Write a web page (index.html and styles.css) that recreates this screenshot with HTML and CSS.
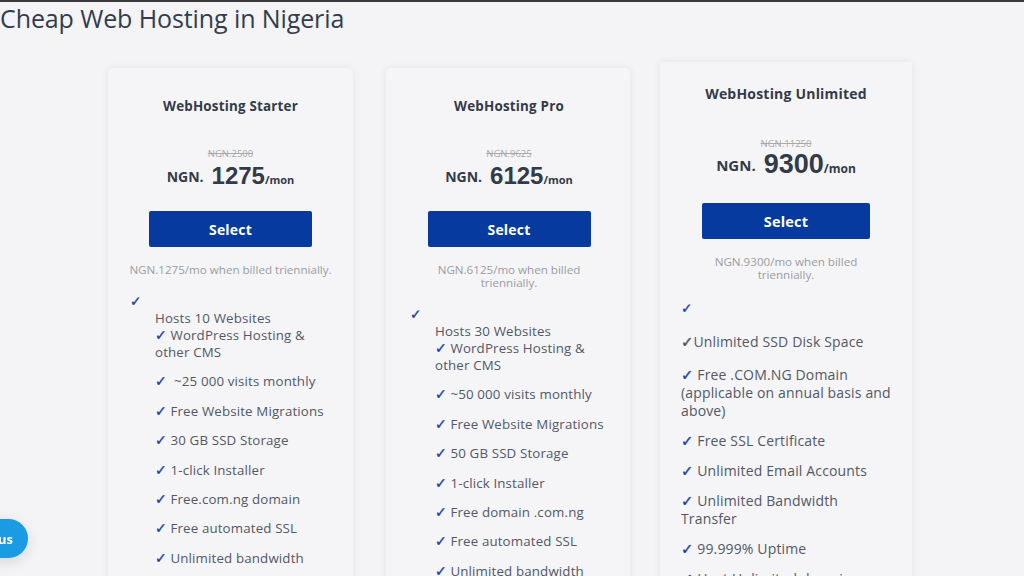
FILE: index.html
```html
<!DOCTYPE html>
<html lang="en">
<head>
<meta charset="utf-8">
<title>Cheap Web Hosting in Nigeria</title>
<link rel="stylesheet" href="styles.css">
</head>
<body>
<h1 class="page-title">Cheap Web Hosting in Nigeria</h1>
<section class="plans">
  <article class="plan plan-starter">
    <h2 class="plan-name">WebHosting Starter</h2>
    <div class="old-price">NGN.2500</div>
    <div class="price"><span class="cur">NGN.</span><span class="amount">1275</span><span class="per">/mon</span></div>
    <a class="select-btn" href="#">Select</a>
    <p class="billing one-line">NGN.1275/mo when billed triennially.</p>
    <p class="lead-check"><span class="ck">✓</span></p>
    <ul class="features indented">
      <li>Hosts 10 Websites<br><span class="ck">✓</span> WordPress Hosting &amp; other CMS</li>
      <li><span class="ck">✓</span>&nbsp; ~25 000 visits monthly</li>
      <li><span class="ck">✓</span> Free Website Migrations</li>
      <li><span class="ck">✓</span> 30 GB SSD Storage</li>
      <li><span class="ck">✓</span> 1-click Installer</li>
      <li><span class="ck">✓</span> Free.com.ng domain</li>
      <li><span class="ck">✓</span> Free automated SSL</li>
      <li><span class="ck">✓</span> Unlimited bandwidth</li>
      <li><span class="ck">✓</span> Free email accounts</li>
    </ul>
  </article>
  <article class="plan plan-pro">
    <h2 class="plan-name">WebHosting Pro</h2>
    <div class="old-price">NGN.9625</div>
    <div class="price"><span class="cur">NGN.</span><span class="amount">6125</span><span class="per">/mon</span></div>
    <a class="select-btn" href="#">Select</a>
    <p class="billing">NGN.6125/mo when billed<br>triennially.</p>
    <p class="lead-check"><span class="ck">✓</span></p>
    <ul class="features indented">
      <li>Hosts 30 Websites<br><span class="ck">✓</span> WordPress Hosting &amp; other CMS</li>
      <li><span class="ck">✓</span> ~50 000 visits monthly</li>
      <li><span class="ck">✓</span> Free Website Migrations</li>
      <li><span class="ck">✓</span> 50 GB SSD Storage</li>
      <li><span class="ck">✓</span> 1-click Installer</li>
      <li><span class="ck">✓</span> Free domain .com.ng</li>
      <li><span class="ck">✓</span> Free automated SSL</li>
      <li><span class="ck">✓</span> Unlimited bandwidth</li>
    </ul>
  </article>
  <article class="plan plan-unlimited">
    <h2 class="plan-name">WebHosting Unlimited</h2>
    <div class="old-price">NGN.11250</div>
    <div class="price"><span class="cur">NGN.</span><span class="amount">9300</span><span class="per">/mon</span></div>
    <a class="select-btn" href="#">Select</a>
    <p class="billing">NGN.9300/mo when billed<br>triennially.</p>
    <p class="lead-check"><span class="ck">✓</span></p>
    <ul class="features flat">
      <li><span class="ck dark">✓</span>Unlimited SSD Disk Space</li>
      <li><span class="ck">✓</span> Free .COM.NG Domain (applicable on annual basis and above)</li>
      <li><span class="ck">✓</span> Free SSL Certificate</li>
      <li><span class="ck">✓</span> Unlimited Email Accounts</li>
      <li><span class="ck">✓</span> Unlimited Bandwidth Transfer</li>
      <li><span class="ck">✓</span> 99.999% Uptime</li>
      <li><span class="ck">✓</span> Host Unlimited domains</li>
    </ul>
  </article>
</section>
<a class="contact-btn" href="#">Contact us</a>
</body>
</html>
```
FILE: styles.css
```css
html, body {
  margin: 0;
  padding: 0;
}
body {
  background: #f4f4f6;
  border-top: 2px solid #3b3b3d;
  font-family: "Open Sans", "Noto Sans", sans-serif;
  color: #333b4c;
  overflow: hidden;
  height: 574px;
}
.page-title {
  margin: 0;
  padding-left: 0;
  font-size: 25px;
  line-height: 32px;
  font-weight: 400;
  color: #333c4e;
  letter-spacing: -0.1px;
}
.plans {
  display: flex;
  align-items: flex-start;
  padding-left: 108px;
  padding-top: 28px;
}
.plan {
  background: #f5f5f7;
  border-radius: 5px;
  box-shadow: 0 0 9px rgba(0, 0, 0, 0.07);
  text-align: center;
  box-sizing: border-box;
}
.plan-starter {
  width: 245px;
  margin-top: 6px;
  padding: 29px 22px 20px 22px;
}
.plan-pro {
  width: 244px;
  margin-top: 6px;
  margin-left: 33px;
  padding: 29px 22px 20px 24px;
}
.plan-unlimited {
  width: 252px;
  margin-left: 30px;
  padding: 23px 21px 20px 21px;
  border-top-left-radius: 0;
  border-top-right-radius: 0;
}
.plan-name {
  margin: 0;
  font-size: 13.4px;
  line-height: 18px;
  font-weight: 700;
  color: #333a4a;
  letter-spacing: 0.2px;
}
.plan-unlimited .plan-name {
  font-size: 14px;
}
.old-price {
  margin-top: 32px;
  font-size: 9.5px;
  line-height: 14px;
  color: #a9a9ad;
  text-decoration: line-through;
}
.plan-unlimited .old-price {
  margin-top: 34px;
}
.price {
  display: flex;
  justify-content: center;
  align-items: baseline;
  height: 30px;
  line-height: 30px;
  color: #333a48;
  font-weight: 700;
}
.price .cur {
  font-size: 14px;
  margin-right: 8px;
  position: relative;
  top: -2px;
}
.price .amount {
  font-family: "Liberation Sans", Arial, sans-serif;
  font-size: 24px;
}
.price .per {
  font-size: 11px;
}
.plan-unlimited .price {
  margin-top: -2px;
}
.plan-unlimited .price .cur {
  font-size: 15px;
}
.plan-unlimited .price .amount {
  font-size: 27px;
}
.plan-unlimited .price .per {
  font-size: 12px;
}
.select-btn {
  display: flex;
  align-items: center;
  justify-content: center;
  margin: 20px auto 0 auto;
  width: 163px;
  height: 36px;
  background: #063a9e;
  border-radius: 2px;
  color: #ffffff;
  text-decoration: none;
  font-weight: 700;
  font-size: 14px;
  letter-spacing: 0.2px;
}
.plan-unlimited .select-btn {
  width: 168px;
  margin-top: 24px;
  font-size: 14.5px;
}
.billing {
  margin: 16px 0 0 0;
  font-size: 11.6px;
  line-height: 13px;
  color: #9a9ca2;
}
.billing.one-line {
  white-space: nowrap;
  margin-left: -4px;
  margin-right: -4px;
}
.lead-check {
  margin: 16px 0 0 0;
  text-align: left;
  font-size: 13px;
  line-height: 18px;
}
.plan-unlimited .lead-check {
  margin-top: 18px;
  line-height: 18px;
}
.ck {
  color: #1d3f9c;
  font-family: "DejaVu Sans", sans-serif;
  font-weight: 700;
  font-size: 1.05em;
  -webkit-text-stroke: 0.35px currentColor;
}
.ck.dark {
  color: #4a4f5a;
}
.features {
  list-style: none;
  margin: 0;
  text-align: left;
  font-size: 13.3px;
  line-height: 17px;
  color: #525866;
  letter-spacing: 0.15px;
}
.features.indented {
  padding-left: 25px;
}
.features.indented li {
  margin-bottom: 12.4px;
}
.features.flat {
  padding: 0;
  margin-top: 16px;
  font-size: 14px;
  line-height: 18px;
}
.features.flat li {
  margin-bottom: 12px;
}
.features.flat li:first-child {
  margin-bottom: 15px;
}
.contact-btn {
  position: fixed;
  right: calc(100% - 28px);
  bottom: 18px;
  height: 39px;
  padding: 0 15px 0 20px;
  display: flex;
  align-items: center;
  border-radius: 20px;
  background: #1a9be4;
  color: #ffffff;
  font-weight: 700;
  font-size: 13px;
  text-decoration: none;
  box-shadow: 0 4px 14px rgba(0, 0, 0, 0.12);
  white-space: nowrap;
}
```
